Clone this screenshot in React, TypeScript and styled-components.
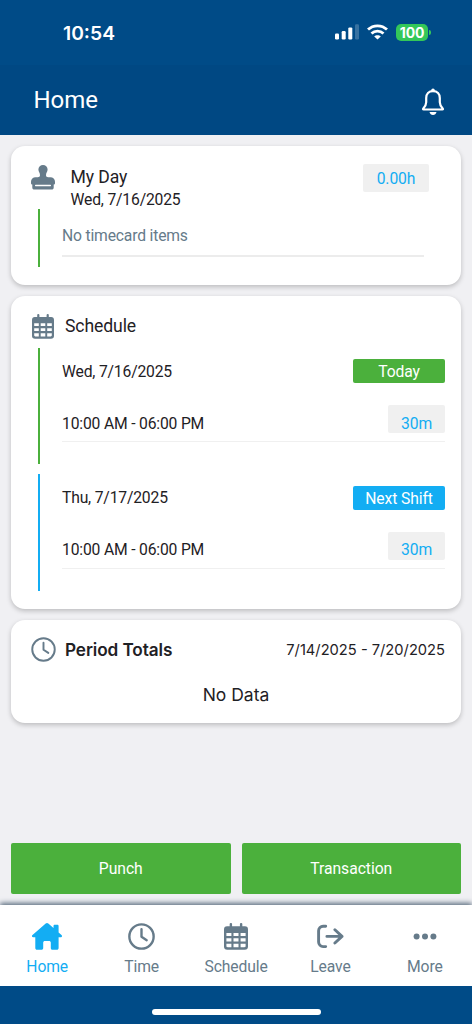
import React from 'react';
import styled, { createGlobalStyle } from 'styled-components';

const c = {
  navy: '#004b87',
  navyDeep: '#004883',
  page: '#f0f0f3',
  green: '#4bb03c',
  blue: '#13adf3',
  slate: '#667b8a',
  ink: '#1f2125',
};

const GlobalStyle = createGlobalStyle`
  *, *::before, *::after { box-sizing: border-box; }
  body { margin: 0; background: ${c.page}; }
  svg { display: block; flex: none; }
`;

const Screen = styled.div`
  width: 472px;
  height: 1024px;
  display: flex;
  flex-direction: column;
  overflow: hidden;
  background: ${c.page};
  color: ${c.ink};
  font-family: Roboto, 'Liberation Sans', sans-serif;
`;

const StatusBar = styled.div`
  height: 65px;
  flex: none;
  display: flex;
  justify-content: space-between;
  padding: 22px 44px 0 63px;
  background: ${c.navy};
  color: #fff;
`;

const StatusTime = styled.div`
  font: 600 19.3px/22px Inter, sans-serif;
`;

const StatusIcons = styled.div`
  display: flex;
  align-items: center;
  gap: 8px;
  height: 20px;
`;

const Battery = styled.div`
  position: relative;
  width: 32px;
  height: 17px;
  border-radius: 5px;
  background: #34c759;
  color: #fff;
  font: 700 14px/17px Inter, sans-serif;
  letter-spacing: -0.2px;
  text-align: center;

  &::after {
    content: '';
    position: absolute;
    right: -3px;
    top: 6px;
    width: 2px;
    height: 5px;
    border-radius: 0 2px 2px 0;
    background: #34c759;
  }
`;

const AppBar = styled.header`
  height: 70px;
  flex: none;
  display: flex;
  justify-content: space-between;
  padding: 19px 27px 0 33.4px;
  background: ${c.navyDeep};
  color: #fff;
`;

const AppTitle = styled.h1`
  margin: 0;
  font-size: 24px;
  font-weight: 400;
  line-height: 32px;
`;

const BellSlot = styled.div`
  padding-top: 4px;
`;

const Content = styled.main`
  flex: 1;
  display: flex;
  flex-direction: column;
  gap: 11px;
  padding: 11px 11px 0;
`;

const Card = styled.section<{ $height: number }>`
  height: ${(p) => p.$height}px;
  flex: none;
  border-radius: 14px;
  background: #fff;
  box-shadow: 0 2px 5px rgba(0, 0, 0, 0.22);
`;

const CardHeader = styled.div<{ $height: number; $top: number; $gap: number; $left?: number; $right?: number }>`
  display: flex;
  align-items: flex-start;
  height: ${(p) => p.$height}px;
  padding: ${(p) => p.$top}px ${(p) => p.$right ?? 16}px 0 ${(p) => p.$left ?? 20}px;
  gap: ${(p) => p.$gap}px;
`;

const Titles = styled.div`
  flex: 1;
`;

const CardTitle = styled.h2<{ $bold?: boolean }>`
  margin: 0;
  font-size: ${(p) => (p.$bold ? 17.2 : 17.6)}px;
  font-weight: ${(p) => (p.$bold ? 600 : 400)};
  font-family: ${(p) => (p.$bold ? 'Inter, sans-serif' : 'inherit')};
  line-height: ${(p) => (p.$bold ? 25 : 24)}px;
  letter-spacing: -0.1px;
`;

const Subtitle = styled.div`
  font-size: 15.7px;
  line-height: 21px;
  letter-spacing: -0.18px;
`;

const Range = styled.div`
  font: 400 14.7px/26px Inter, sans-serif;
`;

const Chip = styled.span<{ $width: number; $height: number; $drop?: number }>`
  width: ${(p) => p.$width}px;
  height: ${(p) => p.$height}px;
  margin-top: ${(p) => (p.$drop ? 0 : -0.6)}px;
  padding-top: ${(p) => p.$drop ?? 0}px;
  border-radius: 2px;
  background: #f0f0f0;
  color: ${c.blue};
  font-size: 15.7px;
  line-height: ${(p) => (p.$drop ? 28 : 30)}px;
  letter-spacing: -0.1px;
  text-align: center;
`;

const Tag = styled.span<{ $color: string }>`
  width: 92px;
  height: 24px;
  border-radius: 2px;
  background: ${(p) => p.$color};
  color: #fff;
  font-size: 15.7px;
  line-height: 25px;
  letter-spacing: -0.12px;
  text-align: center;
`;

const Entry = styled.div<{ $color: string; $height: number; $right?: number }>`
  height: ${(p) => p.$height}px;
  margin: 0 ${(p) => p.$right ?? 16}px 10px 27px;
  padding-left: 22px;
  border-left: 2px solid ${(p) => p.$color};
`;

const EntryRow = styled.div<{ $height: number; $top: number; $line?: string; $weight?: number }>`
  display: flex;
  justify-content: space-between;
  height: ${(p) => p.$height}px;
  padding-top: ${(p) => p.$top}px;
  border-bottom: ${(p) => (p.$line ? `${p.$weight ?? 1}px solid ${p.$line}` : 'none')};
`;

const EntryText = styled.span<{ $muted?: boolean; $drop?: number }>`
  padding-top: ${(p) => p.$drop ?? 0}px;
  color: ${(p) => (p.$muted ? c.slate : 'inherit')};
  font-size: 15.7px;
  line-height: 24px;
  letter-spacing: -0.18px;
`;

const Empty = styled.div`
  font: 400 17.5px/22px Inter, sans-serif;
  text-align: center;
`;

const Actions = styled.div`
  display: flex;
  gap: 11px;
  height: 62px;
  flex: none;
  padding: 0 11px 11.5px;
`;

const ActionButton = styled.button`
  flex: 1;
  padding: 1px 6px 0;
  border: 0;
  border-radius: 2px;
  background: ${c.green};
  color: #fff;
  font: 400 15.7px/20px Roboto, sans-serif;
  letter-spacing: -0.05px;
`;

const TabBar = styled.nav`
  display: flex;
  height: 81px;
  flex: none;
  background: #fff;
  box-shadow: 0 -2px 5px #5d6f80;
`;

const Tab = styled.a<{ $active?: boolean }>`
  flex: 1;
  display: flex;
  flex-direction: column;
  align-items: center;
  gap: 6px;
  padding-top: 18px;
  color: ${(p) => (p.$active ? c.blue : c.slate)};
  font-size: 15.7px;
  line-height: 21px;
  letter-spacing: -0.12px;
`;

const BottomInset = styled.div`
  height: 38px;
  flex: none;
  display: flex;
  justify-content: center;
  padding-top: 23px;
  background: ${c.navy};
`;

const HomeIndicator = styled.div`
  width: 169px;
  height: 5.5px;
  border-radius: 3px;
  background: #fff;
`;

const SignalIcon = () => (
  <svg width="24" height="16" viewBox="0 0 24 16" fill="#fff">
    <rect x="0" y="9.4" width="4" height="6" rx="1.2" />
    <rect x="6.7" y="7" width="4" height="8.4" rx="1.2" />
    <rect x="13.3" y="3.4" width="4" height="12" rx="1.2" />
    <rect x="20" y="0.2" width="4" height="15.2" rx="1.2" opacity="0.22" />
  </svg>
);

const WifiIcon = () => (
  <svg width="21" height="16" viewBox="0 0 21 16" fill="none" stroke="#fff" strokeWidth="2.8">
    <path d="M1 5.6C6.2.5 14.8.5 20 5.6" />
    <path d="M4.500 9.400c3.300-3.100 8.700-3.100 12 0" />
    <path d="M10.500 15.600l-3.300-3.200c1.700-1.700 4.900-1.700 6.600 0z" fill="#fff" stroke="none" />
  </svg>
);

const BellIcon = () => (
  <svg width="24" height="28" viewBox="0 0 24 28">
    <path
      d="M12 3.200C7.700 3.200 5.200 6 5.200 10v4.200c0 2.500-1.100 4.300-2.900 6.200-.5.600-.3 1.100.3 1.100h18.800c.6 0 .8-.5.300-1.100-1.800-1.900-2.900-3.700-2.900-6.200V10c0-4-2.500-6.800-6.800-6.800z"
      fill="none"
      stroke="#fff"
      strokeWidth="2.200"
      strokeLinejoin="round"
    />
    <path d="M10.200 3.300V2.300a1.800 1.800 0 0 1 3.600 0v1z" fill="#fff" />
    <path d="M8.500 24h7c-.4 1.900-1.800 2.900-3.500 2.900S8.900 25.900 8.500 24z" fill="#fff" />
  </svg>
);

const StampIcon = () => (
  <svg width="24" height="25" viewBox="0 0 24 25">
    <path
      d="M12 0a4.600 4.600 0 0 1 4.600 4.600c0 2.100-1.600 3.100-1.600 5.600 0 1.300.8 2 2.200 2h2.300A4.500 4.500 0 0 1 24 16.700v1.500c0 .8-.6 1.400-1.300 1.400v2.800c0 1.300-.8 2.100-2 2.100H3.300c-1.200 0-2-.8-2-2.100v-2.800C.6 19.600 0 19 0 18.200v-1.500a4.500 4.500 0 0 1 4.500-4.500h2.300c1.400 0 2.200-.7 2.200-2 0-2.500-1.600-3.500-1.600-5.600A4.600 4.600 0 0 1 12 0z"
      fill={c.slate}
    />
    <rect x="4" y="19.700" width="16" height="1.500" rx=".6" fill="#fff" />
  </svg>
);

const CalendarIcon = ({ width, height }: { width: number; height: number }) => (
  <svg width={width} height={height} viewBox="0 0 22 25" preserveAspectRatio="none" fill={c.slate}>
    <rect x="5.200" y="0" width="2.200" height="5" rx="1" />
    <rect x="14.600" y="0" width="2.200" height="5" rx="1" />
    <path
      fillRule="evenodd"
      d="M3.200 3h15.600A3 3 0 0 1 22 6v15.600A3 3 0 0 1 19 24.700H3a3 3 0 0 1-3-3.100V6a3 3 0 0 1 3.200-3zM2.200 9.200v2.900h4.600V9.200zm6.500 0v2.900h4.600V9.200zm6.500 0v2.900h4.600V9.200zM2.200 14.200v2.900h4.600v-2.900zm6.500 0v2.900h4.600v-2.900zm6.500 0v2.900h4.600v-2.900zM2.200 19.300v2c0 .7.500 1.100 1.100 1.100h3.500v-3.100zm6.500 0v3.100h4.600v-3.100zm6.500 0v3.100h3.500c.6 0 1.100-.4 1.100-1.100v-2z"
    />
  </svg>
);

const ClockIcon = ({ size, weight }: { size: number; weight: number }) => (
  <svg width={size} height={size} viewBox="0 0 26 26" fill="none" stroke={c.slate} strokeWidth={weight} strokeLinecap="round" strokeLinejoin="round">
    <circle cx="13" cy="13" r="11.700" />
    <path d="M13 6v7.200l5 3.300" />
  </svg>
);

const HouseIcon = () => (
  <svg width="30" height="27" viewBox="0 0 30 27" fill={c.blue}>
    <path d="M13.700.6a2 2 0 0 1 2.600 0l5.200 4.500V3.200c0-.9.500-1.400 1.400-1.400h2.300c.9 0 1.400.5 1.400 1.400v6.200l2.900 2.500c1 .9.500 2.400-.9 2.400h-2V25c0 1.100-.7 1.800-1.800 1.800h-4.300c-1.100 0-1.700-.7-1.700-1.800v-5.300c0-1.100-.7-1.700-1.800-1.700h-4c-1.100 0-1.800.6-1.800 1.700V25c0 1.100-.7 1.800-1.800 1.800H5.100c-1.100 0-1.800-.7-1.800-1.800V14.300h-2c-1.400 0-1.800-1.500-.8-2.400z" />
  </svg>
);

const LeaveIcon = () => (
  <svg width="27" height="27" viewBox="0 0 27 27" fill="none" stroke={c.slate} strokeWidth="2.900" strokeLinecap="round" strokeLinejoin="round">
    <path d="M8.700 3.200H6.200a4.500 4.500 0 0 0-4.600 4.500v11.400a4.500 4.500 0 0 0 4.600 4.500h2.500" />
    <path d="M9.900 13.400h15M17.900 6.800l7.100 6.600-7.100 6.600" />
  </svg>
);

const DotsIcon = () => (
  <svg width="24" height="27" viewBox="0 0 24 27" fill={c.slate}>
    <circle cx="3.600" cy="13.400" r="3" />
    <circle cx="12" cy="13.400" r="3" />
    <circle cx="20.400" cy="13.400" r="3" />
  </svg>
);

const shifts = [
  { date: 'Wed, 7/16/2025', tag: 'Today', color: c.green, hours: '10:00 AM - 06:00 PM', rest: '30m' },
  { date: 'Thu, 7/17/2025', tag: 'Next Shift', color: c.blue, hours: '10:00 AM - 06:00 PM', rest: '30m' },
];

const tabs = [
  { label: 'Home', icon: <HouseIcon />, active: true },
  { label: 'Time', icon: <ClockIcon size={27} weight={2.3} /> },
  { label: 'Schedule', icon: <CalendarIcon width={24} height={27} /> },
  { label: 'Leave', icon: <LeaveIcon /> },
  { label: 'More', icon: <DotsIcon /> },
];

export default function App() {
  return (
    <Screen>
      <GlobalStyle />
      <StatusBar>
        <StatusTime>10:54</StatusTime>
        <StatusIcons>
          <SignalIcon />
          <WifiIcon />
          <Battery>100</Battery>
        </StatusIcons>
      </StatusBar>
      <AppBar>
        <AppTitle>Home</AppTitle>
        <BellSlot>
          <BellIcon />
        </BellSlot>
      </AppBar>
      <Content>
        <Card $height={139}>
          <CardHeader $height={63} $top={19} $gap={15.5} $right={32}>
            <StampIcon />
            <Titles>
              <CardTitle>My Day</CardTitle>
              <Subtitle>Wed, 7/16/2025</Subtitle>
            </Titles>
            <Chip $width={66} $height={28}>0.00h</Chip>
          </CardHeader>
          <Entry $color={c.green} $height={58} $right={37}>
            <EntryRow $height={48} $top={15} $line="#ececec" $weight={2}>
              <EntryText $muted>No timecard items</EntryText>
            </EntryRow>
          </Entry>
        </Card>
        <Card $height={312.5}>
          <CardHeader $height={51.5} $top={18} $gap={11} $left={21}>
            <CalendarIcon width={22} height={25} />
            <CardTitle>Schedule</CardTitle>
          </CardHeader>
          {shifts.map((s) => (
            <Entry key={s.tag} $color={s.color} $height={116.7}>
              <EntryRow $height={57.4} $top={11.6}>
                <EntryText $drop={0.6}>{s.date}</EntryText>
                <Tag $color={s.color}>{s.tag}</Tag>
              </EntryRow>
              <EntryRow $height={37.6} $top={0} $line="#f0f0f0">
                <EntryText $drop={6.9}>{s.hours}</EntryText>
                <Chip $width={57} $height={28} $drop={4.9}>{s.rest}</Chip>
              </EntryRow>
            </Entry>
          ))}
        </Card>
        <Card $height={103.5}>
          <CardHeader $height={64} $top={17} $gap={9}>
            <ClockIcon size={25} weight={2} />
            <Titles>
              <CardTitle $bold>Period Totals</CardTitle>
            </Titles>
            <Range>7/14/2025 - 7/20/2025</Range>
          </CardHeader>
          <Empty>No Data</Empty>
        </Card>
      </Content>
      <Actions>
        <ActionButton>Punch</ActionButton>
        <ActionButton>Transaction</ActionButton>
      </Actions>
      <TabBar>
        {tabs.map((t) => (
          <Tab key={t.label} $active={t.active}>
            {t.icon}
            {t.label}
          </Tab>
        ))}
      </TabBar>
      <BottomInset>
        <HomeIndicator />
      </BottomInset>
    </Screen>
  );
}
